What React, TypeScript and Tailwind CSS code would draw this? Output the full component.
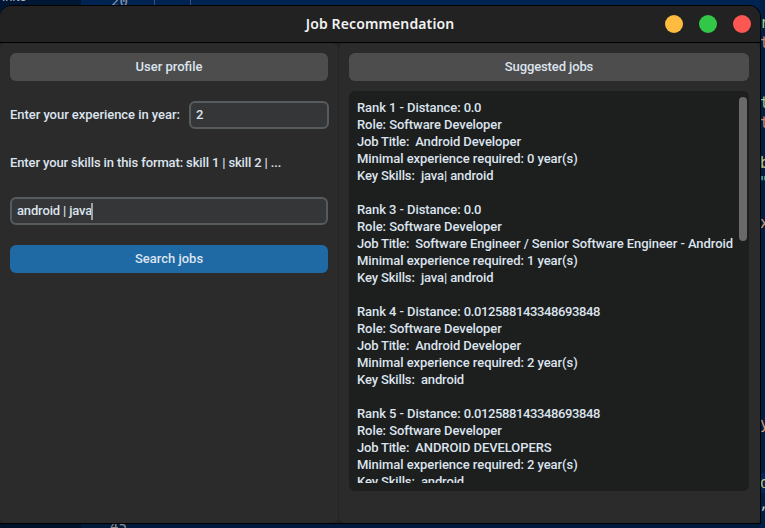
import React from "react";

type Job = {
  rank: number;
  distance: string;
  title: string;
  years: number;
  skills: string;
};

const jobs: Job[] = [
  { rank: 1, distance: "0.0", title: "Android Developer", years: 0, skills: "java| android" },
  { rank: 3, distance: "0.0", title: "Software Engineer / Senior Software Engineer - Android", years: 1, skills: "java| android" },
  { rank: 4, distance: "0.012588143348693848", title: "Android Developer", years: 2, skills: "android" },
  { rank: 5, distance: "0.012588143348693848", title: "ANDROID DEVELOPERS", years: 2, skills: "android" },
];

function Heading({ children }: { children: React.ReactNode }) {
  return (
    <h2 className="flex h-7 items-center justify-center rounded-md bg-[#4d4d4d]">{children}</h2>
  );
}

// Editor window that shows around the edges of the dialog.
function EditorBackdrop() {
  return (
    <div className="absolute inset-0 overflow-hidden bg-[#002451] font-['DejaVu_Sans_Mono','Liberation_Mono',monospace] text-[15px] leading-[20px]">
      <div className="absolute inset-y-0 left-0 w-[81px] bg-[#001733]" />
      <div className="absolute inset-x-0 bottom-0 h-[5px] bg-[#001a3b]" />
      <div className="absolute bottom-0 left-0 h-[5px] w-[81px] bg-[#00112a]" />
      <div className="absolute left-[154px] top-0 h-[6px] w-px bg-[#404f7d]" />
      <div className="absolute left-[190px] top-0 h-[6px] w-px bg-[#404f7d]" />
      <span className="absolute -top-[10px] left-[2px] font-['Roboto',sans-serif] text-[13px] leading-[14px] text-[#aeb5bd]">inits</span>
      <span className="absolute -top-[9px] left-[111px] text-[14px] leading-[20px] text-[#8f98a8]">20</span>
      <span className="absolute left-[110px] top-[516px] text-[14px] leading-[20px] text-[#8a8a86]">45</span>
      <div className="absolute bottom-0 right-0 top-0 w-[5px] overflow-hidden bg-[#001f46]">
        <div className="absolute inset-x-0 top-[473px] h-[20px] bg-[#00285b]" />
        <span className="absolute left-0 top-[13px] text-[#a6c98c]">r</span>
        <span className="absolute left-0 top-[33px] text-[#c58c78]">t</span>
        <span className="absolute left-0 top-[93px] text-[#a6c98c]">t</span>
        <span className="absolute left-0 top-[113px] text-[#d58a70]">t</span>
        <span className="absolute left-0 top-[153px] text-[#b5c67f]">b</span>
        <span className="absolute -left-[1px] top-[173px] text-[#65bda0]">"</span>
        <span className="absolute left-0 top-[213px] text-[#d59c75]">x</span>
        <span className="absolute left-0 top-[414px] text-[#d59c75]">y</span>
        <span className="absolute left-0 top-[473px] text-[#b5c67f]">d</span>
        <span className="absolute -left-[1px] top-[494px] text-[#bdc5d5]">,</span>
      </div>
    </div>
  );
}

function ProfilePanel() {
  return (
    <section className="flex w-[338px] flex-col rounded-md bg-[#2b2b2b] px-2.5 pt-2.5">
      <Heading>User profile</Heading>
      <div className="-mr-px mt-5 flex h-7 items-center justify-between">
        <span className="tracking-[-0.05px]">Enter your experience in year:</span>
        <div className="flex h-7 w-[140px] items-center rounded-md border-2 border-[#565b5e] bg-[#343638] px-[5px]">2</div>
      </div>
      <div className="mt-5 flex h-7 items-center whitespace-pre">
        <span className="tracking-[-0.12px]">Enter your skills in this format: </span>
        <span className="tracking-[-0.14px]">skill 1 | skill 2 | ...</span>
      </div>
      <div className="mt-5 flex h-7 items-center rounded-md border-2 border-[#565b5e] bg-[#343638] px-[5px]">
        <span className="tracking-[-0.15px]">android | java</span>
        <i className="-ml-px h-[17px] w-[2px] bg-[#a0a0a0]" />
      </div>
      <button className="mt-5 flex h-7 items-center justify-center rounded-md bg-[#1f6aa5]">Search jobs</button>
    </section>
  );
}

function JobsPanel() {
  return (
    <section className="flex w-[421px] flex-col rounded-md bg-[#2b2b2b] px-2.5 pt-2.5 pr-[11px]">
      <Heading>
        <span className="tracking-[-0.12px]">Suggested jobs</span>
      </Heading>
      <div className="mt-2.5 flex h-[400px] rounded-md bg-[#1d1e1e] py-2 pl-2">
        <div className="h-[384px] w-[382px] overflow-hidden whitespace-pre leading-[17px]">
          {jobs.map((job) => (
            <div key={job.rank} className="mb-[17px]">
              <div>
                <span className="tracking-[-0.08px]">{`Rank ${job.rank} - Distance: `}</span>
                <span className="tracking-[-0.38px]">{job.distance}</span>
              </div>
              <div className="tracking-[-0.06px]">Role: Software Developer</div>
              <div>
                <span className="tracking-[-0.2px]">{"Job Title:  "}</span>
                <span className="tracking-[-0.07px]">{job.title}</span>
              </div>
              <div className="tracking-[-0.06px]">{`Minimal experience required: ${job.years} year(s)`}</div>
              <div>
                <span className="tracking-[-0.14px]">{"Key Skills:  "}</span>
                <span className="tracking-[-0.12px]">{job.skills}</span>
              </div>
            </div>
          ))}
        </div>
        <div className="-mt-[2px] h-[144px] w-2 rounded-full bg-[#696969]" />
      </div>
    </section>
  );
}

export default function App() {
  return (
    <main className="relative h-[528px] w-[765px] overflow-hidden">
      <EditorBackdrop />
      <div className="absolute left-0 top-[5px] flex h-[519px] w-[761px] flex-col overflow-hidden rounded-t-[12px] border-y border-r border-black bg-[#242424] font-['Roboto',sans-serif] text-[13px] font-medium text-[#dce4ee]">
        <header className="grid h-[37px] shrink-0 grid-cols-[1fr_auto_1fr] items-center border-b border-black bg-[#222222] pr-[9px]">
          <span />
          <h1 className="pl-[9px] font-['Noto_Sans',sans-serif] text-[14px] font-semibold leading-[20px] tracking-[0.12px] text-[#f2f2f2]">Job Recommendation</h1>
          <div className="flex justify-end gap-4">
            <i className="size-[18px] rounded-full bg-[#fdbc40]" />
            <i className="size-[18px] rounded-full bg-[#33c748]" />
            <i className="size-[18px] rounded-full bg-[#fc5753]" />
          </div>
        </header>
        <div className="flex flex-1 gap-px">
          <ProfilePanel />
          <JobsPanel />
        </div>
      </div>
    </main>
  );
}
